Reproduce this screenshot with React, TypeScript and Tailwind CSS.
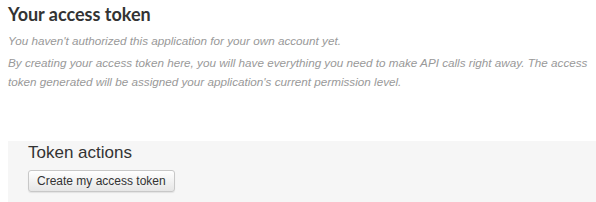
export default function App() {
  return (
    <div className="w-[596px] h-[202px] bg-white overflow-hidden font-['Liberation_Sans',Arial,sans-serif]">
      <div className="pl-2 pt-[3px]">
        <h2 className="font-['Lato',sans-serif] font-bold text-[18px] leading-[22px] text-[#333]">
          Your access token
        </h2>
        <p className="mt-[6px] italic text-[11.7px] leading-[19px] text-[#999]">
          You haven't authorized this application for your own account yet.
        </p>
        <p className="mt-[3px] italic text-[11.7px] leading-[19px] text-[#999] pr-1">
          By creating your access token here, you will have everything you need to make API calls right away. The access
          token generated will be assigned your application's current permission level.
        </p>
      </div>
      <div className="ml-2 mt-[50px] bg-[#f6f6f6] h-[80px] pl-5 pt-[2px]">
        <h3 className="text-[17px] leading-[20px] text-[#333]">Token actions</h3>
        <button className="mt-[7px] h-[22px] px-[8px] text-[12px] text-[#333] border border-[#c8c8c8] rounded-[3px] bg-gradient-to-b from-white to-[#e6e6e6] shadow-[0_1px_1px_rgba(0,0,0,0.08)]">
          Create my access token
        </button>
      </div>
    </div>
  );
}
